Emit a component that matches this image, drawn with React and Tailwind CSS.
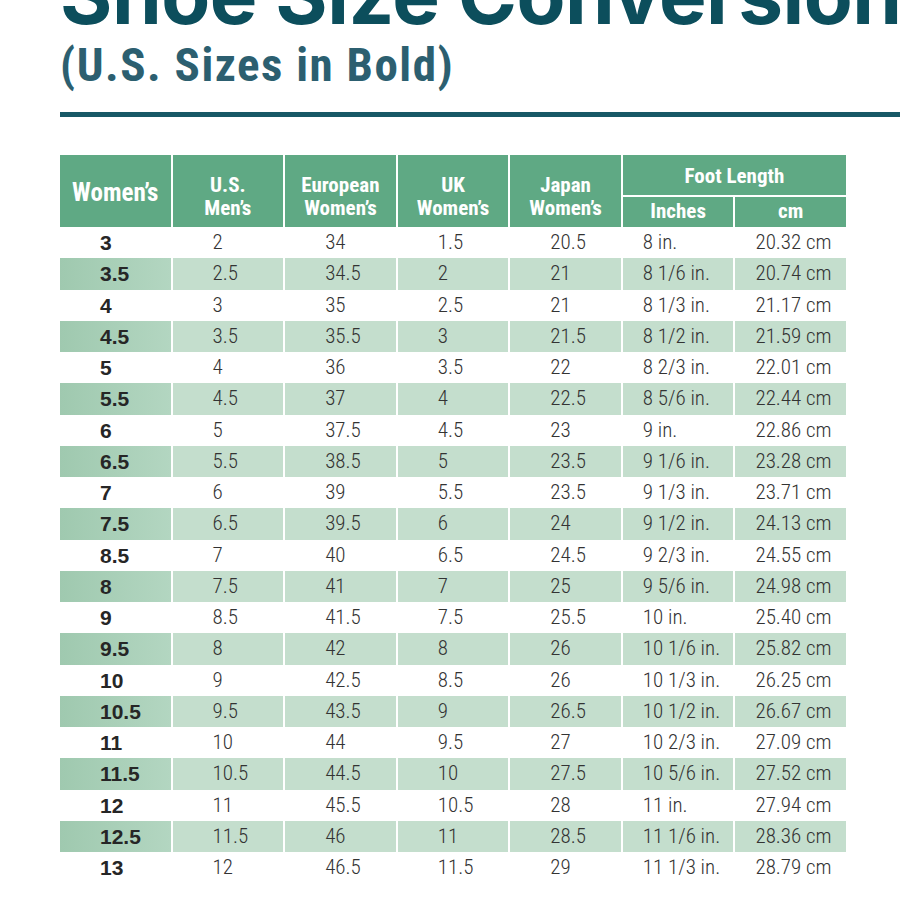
const rows = [
  ["3", "2", "34", "1.5", "20.5", "8 in.", "20.32 cm"],
  ["3.5", "2.5", "34.5", "2", "21", "8 1/6 in.", "20.74 cm"],
  ["4", "3", "35", "2.5", "21", "8 1/3 in.", "21.17 cm"],
  ["4.5", "3.5", "35.5", "3", "21.5", "8 1/2 in.", "21.59 cm"],
  ["5", "4", "36", "3.5", "22", "8 2/3 in.", "22.01 cm"],
  ["5.5", "4.5", "37", "4", "22.5", "8 5/6 in.", "22.44 cm"],
  ["6", "5", "37.5", "4.5", "23", "9 in.", "22.86 cm"],
  ["6.5", "5.5", "38.5", "5", "23.5", "9 1/6 in.", "23.28 cm"],
  ["7", "6", "39", "5.5", "23.5", "9 1/3 in.", "23.71 cm"],
  ["7.5", "6.5", "39.5", "6", "24", "9 1/2 in.", "24.13 cm"],
  ["8.5", "7", "40", "6.5", "24.5", "9 2/3 in.", "24.55 cm"],
  ["8", "7.5", "41", "7", "25", "9 5/6 in.", "24.98 cm"],
  ["9", "8.5", "41.5", "7.5", "25.5", "10 in.", "25.40 cm"],
  ["9.5", "8", "42", "8", "26", "10 1/6 in.", "25.82 cm"],
  ["10", "9", "42.5", "8.5", "26", "10 1/3 in.", "26.25 cm"],
  ["10.5", "9.5", "43.5", "9", "26.5", "10 1/2 in.", "26.67 cm"],
  ["11", "10", "44", "9.5", "27", "10 2/3 in.", "27.09 cm"],
  ["11.5", "10.5", "44.5", "10", "27.5", "10 5/6 in.", "27.52 cm"],
  ["12", "11", "45.5", "10.5", "28", "11 in.", "27.94 cm"],
  ["12.5", "11.5", "46", "11", "28.5", "11 1/6 in.", "28.36 cm"],
  ["13", "12", "46.5", "11.5", "29", "11 1/3 in.", "28.79 cm"],
];

const headCell =
  "bg-[#5fa984] text-white font-bold font-['Roboto_Condensed',sans-serif] flex items-center justify-center text-center";

const SizeRow = ({ row, shaded }) => (
  <div className="grid grid-cols-7 gap-x-[2px] h-[31.25px]">
    {row.map((val, i) => {
      const first = i === 0;
      const pad = i >= 5 ? "pl-5" : "pl-10";
      let bg = "bg-white";
      if (shaded) bg = first ? "bg-gradient-to-r from-[#9fc9af] to-[#b3d6c1]" : "bg-[#c4decd]";
      return (
        <div key={i} className={`${bg} ${pad} flex items-center`}>
          {first ? (
            <span className="font-['Liberation_Sans',sans-serif] font-bold text-[21px] text-[#262626]">{val}</span>
          ) : (
            <span className="font-['Roboto_Condensed',sans-serif] font-light text-[21px] text-[#333333]">{val}</span>
          )}
        </div>
      );
    })}
  </div>
);

export default function App() {
  return (
    <div className="w-[900px] h-[900px] overflow-hidden bg-white">
      <div className="pl-[60px]">
        <h1 className="-mt-[35px] h-[60px] text-[80px] leading-[60px] font-bold text-[#0c4e5c] font-['Inter',sans-serif] whitespace-nowrap tracking-[-0.5px]">
          Shoe Size Conversion
        </h1>
        <h2 className="mt-[16px] text-[47px] leading-none font-bold text-[#2c5f70] font-['Roboto_Condensed',sans-serif] whitespace-nowrap tracking-[1.5px]">
          (U.S. Sizes in Bold)
        </h2>
        <div className="mt-[24px] h-[5px] bg-[#175866]" />
      </div>

      <div className="ml-[60px] mt-[38px] w-[786px]">
        <div className="grid grid-cols-7 grid-rows-[40px_30px] gap-[2px] h-[72px]">
          <div className={`${headCell} row-span-2 text-[25px] pt-[3px]`}>Women’s</div>
          <div className={`${headCell} row-span-2 text-[21px] leading-[23px] flex-col pt-[12px]`}>
            <span>U.S.</span>
            <span>Men’s</span>
          </div>
          <div className={`${headCell} row-span-2 text-[21px] leading-[23px] flex-col pt-[12px]`}>
            <span>European</span>
            <span>Women’s</span>
          </div>
          <div className={`${headCell} row-span-2 text-[21px] leading-[23px] flex-col pt-[12px]`}>
            <span>UK</span>
            <span>Women’s</span>
          </div>
          <div className={`${headCell} row-span-2 text-[21px] leading-[23px] flex-col pt-[12px]`}>
            <span>Japan</span>
            <span>Women’s</span>
          </div>
          <div className={`${headCell} col-span-2 text-[21px] pt-[4px]`}>Foot Length</div>
          <div className={`${headCell} text-[21px]`}>Inches</div>
          <div className={`${headCell} text-[21px]`}>cm</div>
        </div>

        <div className="flex flex-col">
          {rows.map((row, i) => (
            <SizeRow key={i} row={row} shaded={i % 2 === 1} />
          ))}
        </div>
      </div>
    </div>
  );
}
